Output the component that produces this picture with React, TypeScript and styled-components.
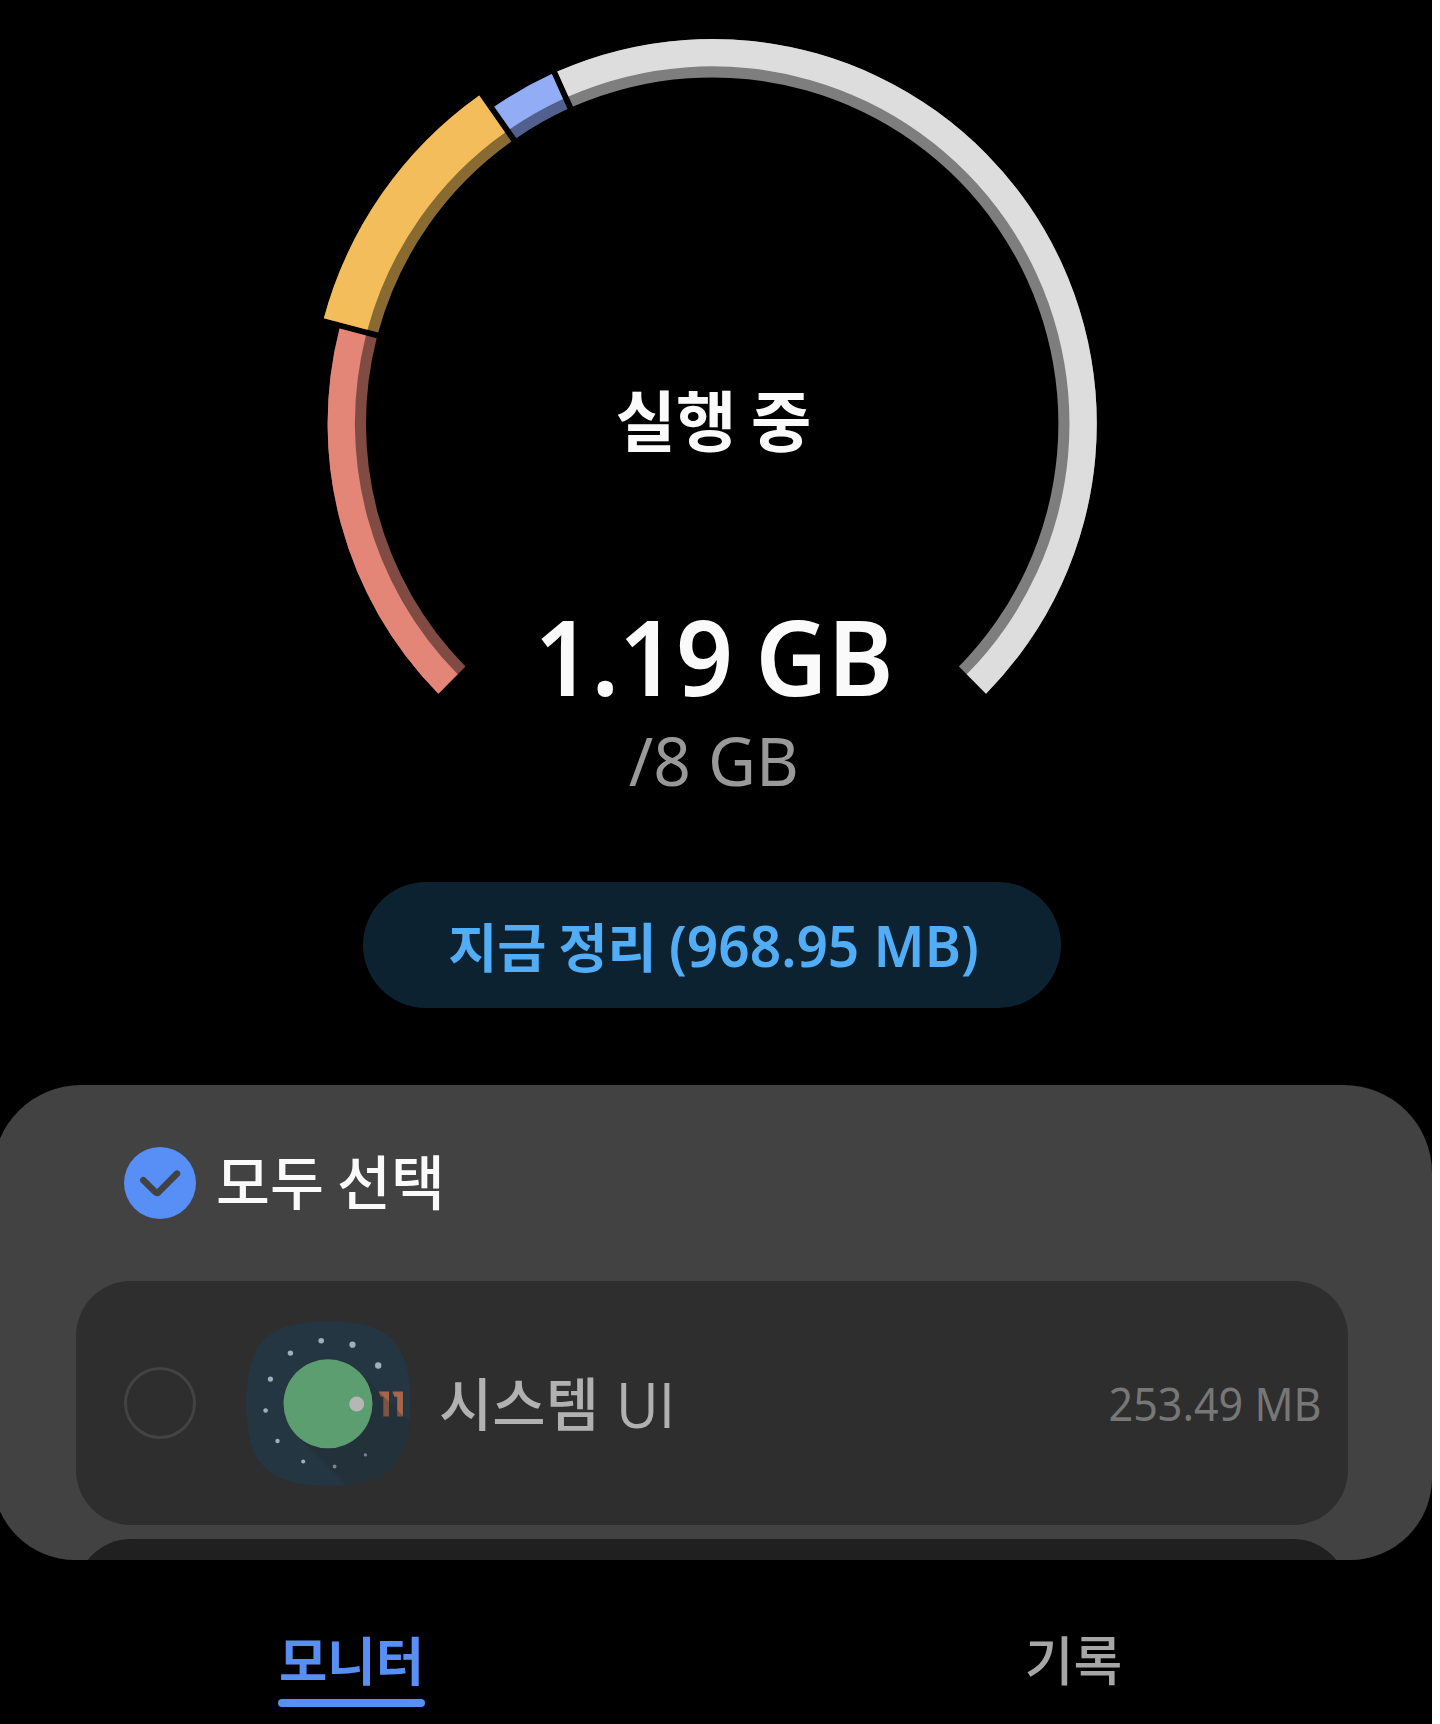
import React from "react";
import styled, { createGlobalStyle } from "styled-components";

const Global = createGlobalStyle`
  *, *::before, *::after { box-sizing: border-box; }
  html, body { margin: 0; background: #fff; }
  body { font-family: "Noto Sans", "Noto Sans CJK KR", sans-serif; }
  button { font: inherit; border: 0; padding: 0; background: none; }
`;

const Screen = styled.main`
  width: 1432px;
  height: 1724px;
  background: #000;
  overflow: hidden;
  display: flex;
  flex-direction: column;
`;

const GaugeArea = styled.section`
  display: grid;
  width: 1432px;
  height: 882px;
  flex: none;
`;

const GaugeSvg = styled.svg`
  grid-area: 1 / 1;
  display: block;
`;

const Readout = styled.div`
  grid-area: 1 / 1;
  display: flex;
  flex-direction: column;
  align-items: center;
  padding-top: 368px;
  padding-right: 5px;
`;

interface TypeProps {
  $size: number;
  $weight: number;
  $color: string;
}

const Hangul = styled.span<TypeProps>`
  font-family: "Noto Sans CJK KR", sans-serif;
  font-size: ${(p) => p.$size}px;
  font-weight: ${(p) => p.$weight};
  color: ${(p) => p.$color};
  line-height: 1;
  white-space: pre;
`;

const Latin = styled(Hangul)<{ $narrow?: number; $origin?: string; $word?: number }>`
  display: block;
  font-family: "Noto Sans", sans-serif;
  word-spacing: ${(p) => p.$word ?? 0}px;
  transform: scaleX(${(p) => p.$narrow ?? 1});
  transform-origin: ${(p) => p.$origin ?? "center"};
`;

const PlainLatin = styled(Latin)`
  font-family: "Open Sans", sans-serif;
`;

const StateRow = styled.div`
  height: 100px;
  display: flex;
  align-items: center;
`;

const UsedRow = styled.div`
  height: 120px;
  margin-top: 127px;
  display: flex;
  align-items: center;
`;

const TotalRow = styled.div`
  height: 80px;
  margin-top: 5px;
  display: flex;
  align-items: center;
`;

const CleanButton = styled.button`
  width: 698px;
  height: 126px;
  margin-left: 363px;
  padding-left: 14px;
  flex: none;
  border-radius: 63px;
  background: #0d2231;
  display: flex;
  align-items: center;
  justify-content: center;
`;

const Panel = styled.section`
  width: 1439px;
  height: 475px;
  margin: 77px 0 0 -7px;
  padding: 0 84px 0 83px;
  flex: none;
  border-radius: 88px 88px 82px 82px;
  background: #424242;
  overflow: hidden;
`;

const SelectAll = styled.div`
  height: 196px;
  padding-left: 48px;
  display: flex;
  align-items: center;
  gap: 20px;
`;

const SelectLabel = styled.span`
  display: flex;
  padding-bottom: 6px;
`;

const Card = styled.div<{ $bg: string }>`
  height: 244px;
  padding: 0 27px 0 48px;
  margin-bottom: 14px;
  border-radius: 55px;
  background: ${(p) => p.$bg};
  display: flex;
  align-items: center;
`;

const EmptyCheck = styled.span`
  width: 72px;
  height: 72px;
  border: 3px solid #434343;
  border-radius: 50%;
`;

const AppIcon = styled.svg`
  margin: 0 28px 0 50px;
  display: block;
`;

const AppName = styled.span`
  display: flex;
  align-items: center;
  flex: 1;
`;

const NameHangul = styled.span`
  display: flex;
  padding-bottom: 4px;
  margin-right: 4px;
`;

const Tabs = styled.nav`
  flex: 1;
  display: grid;
  grid-template-columns: 703px 741px;
  padding-top: 72px;
`;

const Tab = styled.button`
  display: flex;
  flex-direction: column;
  align-items: center;
  justify-self: center;
  align-self: start;
  justify-content: space-between;
  height: 75px;
  width: 147px;
`;

const TabLine = styled.span<{ $active?: boolean }>`
  flex: none;
  width: 147px;
  height: 8px;
  border-radius: 4px;
  background: ${(p) => (p.$active ? "#588ff7" : "transparent")};
`;

const CX = 712.2;
const CY = 423.6;
const HALF_GAP = 3;

function pt(r: number, deg: number, side: number) {
  const a = (deg * Math.PI) / 180 + side * Math.asin(HALF_GAP / r);
  return `${(CX + r * Math.cos(a)).toFixed(2)} ${(CY + r * Math.sin(a)).toFixed(2)}`;
}

function band(r0: number, r1: number, from: number, to: number) {
  const large = to - from > 180 ? 1 : 0;
  return `M${pt(r1, from, 1)}A${r1} ${r1} 0 ${large} 1 ${pt(r1, to, -1)}L${pt(r0, to, -1)}A${r0} ${r0} 0 ${large} 0 ${pt(r0, from, 1)}Z`;
}

const segments = [
  { from: 134.95, to: 194.75, outer: 384.6, fill: "#e38678", shade: "#804b43" },
  { from: 194.75, to: 235.05, outer: 402.4, fill: "#f3bd5c", shade: "#896a30" },
  { from: 235.05, to: 245.8, outer: 384.6, fill: "#92acf5", shade: "#51608f" },
  { from: 245.8, to: 405.05, outer: 384.6, fill: "#dddddd", shade: "#7e7e7e" },
];

const stars = [
  [321.2, 1340.2, 2.8], [352.5, 1344.2, 3.1], [378.2, 1365, 3.2], [290.4, 1352.6, 2.7],
  [270.4, 1378.6, 2.6], [265.6, 1410, 2.3], [277.5, 1440.5, 2.2], [303.2, 1461, 2],
  [334.6, 1466, 1.9], [365.4, 1454.4, 1.6],
];

export default function App() {
  return (
    <>
      <Global />
      <Screen>
        <GaugeArea>
          <GaugeSvg width="1432" height="882" viewBox="0 0 1432 882">
            {segments.map((s) => (
              <g key={s.fill}>
                <path d={band(346.2, s.outer, s.from, s.to)} fill={s.shade} />
                <path d={band(357.3, s.outer, s.from, s.to)} fill={s.fill} />
              </g>
            ))}
          </GaugeSvg>
          <Readout>
            <StateRow><Hangul $size={65.6} $weight={700} $color="#fafafa">실행 중</Hangul></StateRow>
            <UsedRow><Latin $size={105} $weight={600} $color="#fafafa" $narrow={0.95} $word={-4}>1.19 GB</Latin></UsedRow>
            <TotalRow><Latin $size={68} $weight={400} $color="#999" $narrow={0.97}>/8 GB</Latin></TotalRow>
          </Readout>
        </GaugeArea>
        <CleanButton>
          <Hangul $size={53.4} $weight={700} $color="#52adf7">지금 정리 </Hangul>
          <Latin $size={57} $weight={600} $color="#52adf7" $narrow={0.965} $origin="left">(968.95 MB)</Latin>
        </CleanButton>
        <Panel>
          <SelectAll>
            <svg width="72" height="72" viewBox="0 0 72 72">
              <circle cx="36" cy="36" r="36" fill="#588ff7" />
              <path d="M19.300 33.200 31.300 45Q33 46.600 34.700 45L53 26.700" fill="none" stroke="#424242" strokeWidth="6.600" strokeLinecap="round" strokeLinejoin="round" />
            </svg>
            <SelectLabel><Hangul $size={58.6} $weight={500} $color="#fafafa">모두 선택</Hangul></SelectLabel>
          </SelectAll>
          <Card $bg="#2e2e2e">
            <EmptyCheck />
            <AppIcon width="165" height="165" viewBox="246 1320.5 165 165">
              <defs>
                <clipPath id="squircle">
                  <path d="M328.2 1320.8C389 1320.8 410.2 1342 410.2 1403S389 1485.2 328.2 1485.2 246.2 1464 246.2 1403 267.500 1320.800 328.200 1320.800Z" />
                </clipPath>
              </defs>
              <g clipPath="url(#squircle)">
                <rect x="246" y="1320" width="166" height="166" fill="#243642" />
                {stars.map(([x, y, r]) => <circle key={x} cx={x} cy={y} r={r} fill="#9db0bb" />)}
                <path d="M378.600 1391H389V1416H383.300V1396.200H380.600ZM392.400 1391H402.900V1416H397.200V1396.200H394.400Z" fill="#a96549" />
                <path d="M296.500 1434.800 359.500 1371.800 440 1452.300V1500H361.700Z" fill="#22272a" fillOpacity="0.3" />
                <circle cx="328" cy="1403.300" r="44.500" fill="#5d9e70" />
                <circle cx="356.700" cy="1403.500" r="7.500" fill="#b6b6b6" />
              </g>
            </AppIcon>
            <AppName>
              <NameHangul><Hangul $size={58} $weight={500} $color="#b1b1b1">시스템 </Hangul></NameHangul>
              <PlainLatin $size={63} $weight={400} $color="#b1b1b1" $narrow={0.93} $origin="left">UI</PlainLatin>
            </AppName>
            <Latin $size={46} $weight={400} $color="#777" $narrow={0.936} $origin="right">253.49 MB</Latin>
          </Card>
          <Card $bg="#202020" />
        </Panel>
        <Tabs>
          <Tab>
            <Hangul $size={52.5} $weight={700} $color="#588ff7">모니터</Hangul>
            <TabLine $active />
          </Tab>
          <Tab>
            <Hangul $size={53} $weight={500} $color="#a6a6a6">기록</Hangul>
            <TabLine />
          </Tab>
        </Tabs>
      </Screen>
    </>
  );
}
